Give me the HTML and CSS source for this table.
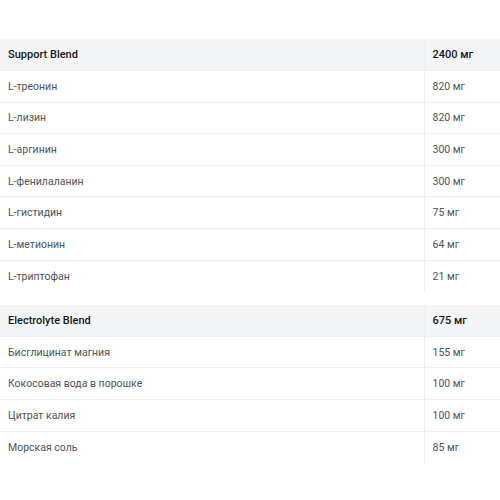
FILE: index.html
```html
<!DOCTYPE html>
<html>
<head>
<meta charset="utf-8">
<link rel="stylesheet" href="styles.css">
</head>
<body>
<div class="page">
  <table class="blend">
    <tr class="head"><td class="name">Support Blend</td><td class="amt">2400 мг</td></tr>
    <tr><td class="name">L-треонин</td><td class="amt">820 мг</td></tr>
    <tr><td class="name">L-лизин</td><td class="amt">820 мг</td></tr>
    <tr><td class="name">L-аргинин</td><td class="amt">300 мг</td></tr>
    <tr><td class="name">L-фенилаланин</td><td class="amt">300 мг</td></tr>
    <tr><td class="name">L-гистидин</td><td class="amt">75 мг</td></tr>
    <tr><td class="name">L-метионин</td><td class="amt">64 мг</td></tr>
    <tr><td class="name">L-триптофан</td><td class="amt">21 мг</td></tr>
  </table>
  <table class="blend">
    <tr class="head"><td class="name">Electrolyte Blend</td><td class="amt">675 мг</td></tr>
    <tr><td class="name">Бисглицинат магния</td><td class="amt">155 мг</td></tr>
    <tr><td class="name">Кокосовая вода в порошке</td><td class="amt">100 мг</td></tr>
    <tr><td class="name">Цитрат калия</td><td class="amt">100 мг</td></tr>
    <tr><td class="name">Морская соль</td><td class="amt">85 мг</td></tr>
  </table>
</div>
</body>
</html>
```
FILE: styles.css
```css
html, body {
  margin: 0;
  padding: 0;
  background: #ffffff;
}
.page {
  padding-top: 39px;
  display: flex;
  flex-direction: column;
  gap: 13px;
  font-family: Roboto, "Noto Sans", sans-serif;
  font-size: 10.5px;
}
.blend {
  width: 500px;
  border-collapse: collapse;
  table-layout: fixed;
}
.blend td {
  height: 31.6px;
  box-sizing: border-box;
  padding: 0 8px;
  border-bottom: 1px solid #eef0f2;
  color: #4e5358;
  vertical-align: middle;
  white-space: nowrap;
}
.blend .amt {
  width: 76px;
  border-left: 1px solid #eef0f2;
}
.blend tr:last-child td {
  border-bottom: none;
}
.blend .head td {
  background: #f4f5f7;
  color: #15171a;
  font-weight: 500;
  font-size: 11px;
  border-bottom: 1px solid #eef0f2;
}
```
